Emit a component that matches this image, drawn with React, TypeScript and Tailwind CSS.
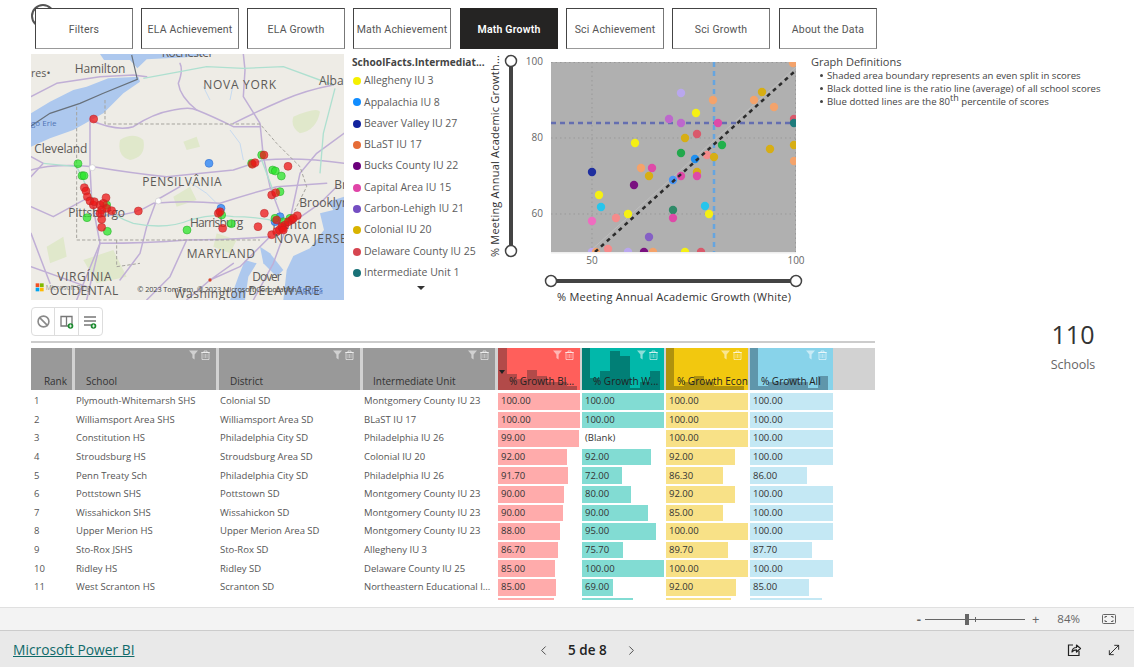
import React from 'react'
import { Ban, ChevronLeft, ChevronRight, MoveDiagonal } from 'lucide-react'

const tabs = ['Filters', 'ELA Achievement', 'ELA Growth', 'Math Achievement', 'Math Growth', 'Sci Achievement', 'Sci Growth', 'About the Data']

const legend: [string, string][] = [
  ['Allegheny IU 3', 'bg-[#f5f000]'],
  ['Appalachia IU 8', 'bg-[#118dff]'],
  ['Beaver Valley IU 27', 'bg-[#12239e]'],
  ['BLaST IU 17', 'bg-[#e66c37]'],
  ['Bucks County IU 22', 'bg-[#6b007b]'],
  ['Capital Area IU 15', 'bg-[#e044a7]'],
  ['Carbon-Lehigh IU 21', 'bg-[#744ec2]'],
  ['Colonial IU 20', 'bg-[#d9b300]'],
  ['Delaware County IU 25', 'bg-[#d64550]'],
  ['Intermediate Unit 1', 'bg-[#197278]'],
]

// scatter points: x, y inside the plot, colour
const dots: [number, number, string][] = [
  [130, 31, '#b9a7ee'], [162, 38, '#f4a36b'], [211, 30, '#d7ae14'], [203, 38, '#f4a36b'], [223, 45, '#f4a36b'],
  [145, 51, '#f5f014'], [118, 57, '#bd68cc'], [130, 61, '#bd68cc'], [167, 61, '#de4aa8'], [243, 57, '#d9596b'],
  [243, 61, '#1f7c7c'], [146, 72, '#d9596b'], [134, 76, '#d7ae14'], [84, 81, '#f5f014'], [171, 83, '#22b14c'],
  [243, 83, '#d7ae14'], [219, 87, '#d7ae14'], [130, 91, '#22a84c'], [144, 97, '#1f8fef'], [156, 93, '#f58b8b'],
  [163, 95, '#d7ae14'], [243, 99, '#f4a36b'], [41, 110, '#1f2f9f'], [90, 106, '#f4a36b'], [101, 106, '#de4aa8'],
  [98, 114, '#d7ae14'], [146, 110, '#d7ae14'], [146, 114, '#de4aa8'], [130, 114, '#de4aa8'], [122, 118, '#4a97f5'],
  [83, 123, '#7a1180'], [48, 133, '#f5f014'], [50, 145, '#27c5ec'], [154, 144, '#27c5ec'], [158, 152, '#f5f014'],
  [77, 152, '#f5f014'], [65, 156, '#f58b8b'], [41, 159, '#ef6cc0'], [122, 148, '#2f8a68'], [122, 156, '#de4aa8'],
  [98, 175, '#8560c5'], [41, 190, '#b9a7ee'], [45, 190, '#f4a36b'], [57, 187, '#f58b8b'], [77, 190, '#b9a7ee'],
  [93, 190, '#7a1180'], [102, 190, '#f4a36b'], [134, 190, '#f5f014'], [150, 190, '#d9596b'], [242, 1, '#f4a36b'],
]

type Row = { rank: number; school: string; district: string; unit: string; bars: [string, number][] }

const rows: Row[] = [
  { rank: 1, school: 'Plymouth-Whitemarsh SHS', district: 'Colonial SD', unit: 'Montgomery County IU 23', bars: [['100.00', 82], ['100.00', 82], ['100.00', 82], ['100.00', 83]] },
  { rank: 2, school: 'Williamsport Area SHS', district: 'Williamsport Area SD', unit: 'BLaST IU 17', bars: [['100.00', 82], ['100.00', 82], ['100.00', 82], ['100.00', 83]] },
  { rank: 3, school: 'Constitution HS', district: 'Philadelphia City SD', unit: 'Philadelphia IU 26', bars: [['99.00', 81], ['(Blank)', 0], ['100.00', 82], ['100.00', 83]] },
  { rank: 4, school: 'Stroudsburg HS', district: 'Stroudsburg Area SD', unit: 'Colonial IU 20', bars: [['92.00', 69], ['92.00', 69], ['92.00', 69], ['100.00', 83]] },
  { rank: 5, school: 'Penn Treaty Sch', district: 'Philadelphia City SD', unit: 'Philadelphia IU 26', bars: [['91.70', 70], ['72.00', 40], ['86.30', 57], ['86.00', 57]] },
  { rank: 6, school: 'Pottstown SHS', district: 'Pottstown SD', unit: 'Montgomery County IU 23', bars: [['90.00', 66], ['80.00', 49], ['92.00', 69], ['100.00', 83]] },
  { rank: 7, school: 'Wissahickon SHS', district: 'Wissahickon SD', unit: 'Montgomery County IU 23', bars: [['90.00', 65], ['90.00', 66], ['85.00', 57], ['100.00', 83]] },
  { rank: 8, school: 'Upper Merion HS', district: 'Upper Merion Area SD', unit: 'Montgomery County IU 23', bars: [['88.00', 62], ['95.00', 74], ['100.00', 82], ['100.00', 83]] },
  { rank: 9, school: 'Sto-Rox JSHS', district: 'Sto-Rox SD', unit: 'Allegheny IU 3', bars: [['86.70', 60], ['75.70', 41], ['89.70', 62], ['87.70', 62]] },
  { rank: 10, school: 'Ridley HS', district: 'Ridley SD', unit: 'Delaware County IU 25', bars: [['85.00', 57], ['100.00', 82], ['100.00', 82], ['100.00', 83]] },
  { rank: 11, school: 'West Scranton HS', district: 'Scranton SD', unit: 'Northeastern Educational I...', bars: [['85.00', 58], ['69.00', 31], ['92.00', 70], ['85.00', 59]] },
  { rank: 12, school: '', district: '', unit: '', bars: [['', 56], ['', 51], ['', 65], ['', 72]] },
]

const barColors = ['bg-[#ffabab]', 'bg-[#82dcd3]', 'bg-[#f8e187]', 'bg-[#c4e8f4]']
const barCols = ['w-[82px] ml-[3px]', 'w-[82px] ml-[2px]', 'w-[82px] ml-[2px]', 'w-[83px] ml-[2px]']

const histCols = [
  { title: '% Growth Bl...', bg: 'bg-[#ff5f5b]', dark: 'bg-[#b24a49]', first: 'w-[9px]', heights: [16, 11, 20, 14, 8, 8, 4], cls: 'w-[82px] ml-[3px]' },
  { title: '% Growth W...', bg: 'bg-[#01b8aa]', dark: 'bg-[#017f76]', first: 'w-[8px]', heights: [12, 19, 39, 34, 2, 8, 19], cls: 'w-[82px] ml-[2px]' },
  { title: '% Growth Econ', bg: 'bg-[#f2c80f]', dark: 'bg-[#b0920d]', first: 'w-[8px]', heights: [4, 8, 14, 8, 4, 4, 4], cls: 'w-[82px] ml-[2px]' },
  { title: '% Growth All', bg: 'bg-[#88d3ea]', dark: 'bg-[#5f96ab]', first: 'w-[8px]', heights: [4, 8, 8, 12, 8, 2, 14], cls: 'w-[83px] ml-[2px]' },
]

const definitions = [
  <>Shaded area boundary represents an even split in scores</>,
  <>Black dotted line is the ratio line (average) of all school scores</>,
  <>Blue dotted lines are the 80<sup className="text-[9px] leading-none">th</sup> percentile of scores</>,
]

const HeaderTools = () => (
  <svg width="24" height="10" viewBox="0 0 24 10" className="absolute top-[2px] right-[4px]">
    <path d="M1 0.5h9L6.6 4.5V9.5L4.4 8V4.5Z" fill="#fff" fillOpacity="0.55" />
    <path d="M13 2.5h9M16 2.5V1h3v1.5M14 2.5h7v7h-7Z" fill="none" stroke="#fff" strokeOpacity="0.55" strokeWidth="1" />
    <path d="M16 4v4M17.5 4v4M19 4v4" stroke="#fff" strokeOpacity="0.55" strokeWidth="0.7" />
  </svg>
)

const MapPanel = () => {
  const blue = [[627, 490], [663, 625], [840, 650], [825, 665]]
  const green = [[234, 491], [246, 527], [252, 527], [785, 465], [755, 490], [818, 510], [826, 513], [844, 528], [840, 575], [261, 653], [322, 694], [561, 690], [694, 671], [665, 645], [825, 655], [320, 615], [850, 665], [870, 655]]
  const red = [[281, 357], [864, 499], [757, 493], [765, 488], [415, 633], [668, 685], [774, 680], [815, 704], [815, 585], [827, 578], [305, 682], [305, 658], [335, 632], [318, 593], [253, 563], [258, 573], [262, 590], [270, 603], [280, 615], [283, 605], [300, 615], [310, 610], [305, 630], [300, 640], [320, 625], [655, 640], [660, 635], [830, 695], [838, 690], [848, 685], [855, 675], [865, 665], [875, 660], [892, 647], [880, 655], [830, 660], [845, 680], [850, 690], [792, 465], [793, 640]]
  const label = 'fill-[#5d5a57]'
  return (
    <svg width="313" height="246" viewBox="93 162 939 738" className="shrink-0" style={{ fontFamily: '"Open Sans", sans-serif' }}>
      <rect x="93" y="162" width="939" height="738" fill="#eeece6" />
      {/* forest patches */}
      <path d="M360 420 Q400 395 430 420 Q440 470 390 480 Q350 470 360 420ZM880 350 Q950 320 960 335 Q950 390 900 400 Q870 380 880 350ZM550 425 L590 410 L600 440 L560 450ZM650 700 L710 720 L690 760 L640 740ZM140 740 L190 710 L200 770 L150 790ZM520 590 L570 560 L590 600 L530 620ZM250 780 L340 750 L380 830 L290 850Z" fill="#e0e8cb" />
      {/* water */}
      <path d="M93 340 L150 305 L220 270 L260 260 L325 235 L415 230 L420 245 L370 280 L310 340 L220 390 L150 415 L93 440Z" fill="#adc8ee" />
      <path d="M300 162 L312 180 L390 180 L412 205 L440 178 L560 172 L640 162Z" fill="#adc8ee" />
      <path d="M1032 590 L985 605 L1000 630 L960 640 L972 690 L930 745 L880 768 L860 810 L850 900 L1032 900Z" fill="#adc8ee" />
      <path d="M780 740 L810 760 L850 810 L830 830 L790 790Z" fill="#adc8ee" />
      <path d="M735 780 L770 790 L745 830 L735 900 L690 900 L715 830Z" fill="#adc8ee" />
      {/* rivers */}
      <path d="M690 390 L720 430 L730 480 M610 260 L630 300 M700 250 L690 300 M560 540 L620 580 L660 620" stroke="#c6daf0" strokeWidth="3" fill="none" />
      {/* roads */}
      <g fill="none" stroke="#c0afd6" strokeWidth="4.5" strokeLinejoin="round" strokeLinecap="round">
        <path d="M93 290 L170 250 L300 230 L400 225 L440 230" />
        <path d="M540 190 Q550 210 535 250 Q540 290 590 330 Q640 350 700 380 L780 380" />
        <path d="M730 162 L735 210 L730 290 L780 370 L790 470 L810 560 L840 640" />
        <path d="M270 360 Q350 395 400 380 Q460 340 520 330 Q570 320 590 330" />
        <path d="M700 370 Q780 330 850 300 Q920 270 1000 255" />
        <path d="M270 350 L270 500 L275 600 L300 730 L260 900" />
        <path d="M93 510 Q160 490 280 500 Q400 520 500 530 Q600 520 700 510 L790 480 Q900 470 1032 490" />
        <path d="M280 640 Q380 660 460 610 Q560 600 660 610 Q750 580 830 560 L980 550" />
        <path d="M300 730 Q440 730 560 720 Q680 720 810 710" />
        <path d="M560 720 L510 830 L440 900 M810 710 L720 800 L630 840 L560 900 M630 840 L700 790" />
        <path d="M93 620 L160 650 L270 590 M93 700 L150 850 M93 800 L260 860 M230 900 L300 730" />
        <path d="M860 680 L960 610 L1010 560 M860 680 L820 790 L760 900 M1032 400 L950 460 L900 520 L870 660" />
        <path d="M93 470 L130 490 L93 530 M540 560 L470 600 L440 680 L420 760 L360 840" />
      </g>
      <g fill="none" stroke="#aee0d0" strokeWidth="4" strokeLinejoin="round">
        <path d="M430 235 L540 215 L620 200 L730 205 L850 200 L1000 255" />
        <path d="M1005 265 L970 400 L960 520" />
        <path d="M130 490 L230 500 L275 590 Q340 650 400 670 Q500 690 570 660 Q640 640 700 650 Q780 650 860 670 L890 650" />
        <path d="M785 480 L830 600" />
      </g>
      {/* borders */}
      <path d="M230 320 L230 720 L780 720 M315 300 L315 372 L780 372 L830 430 L900 500 L920 560 L880 640 M350 720 L350 800 L420 790" fill="none" stroke="#a5a39d" strokeWidth="3" strokeDasharray="10 6" />
      <path d="M93 378 L150 340 L240 310 L310 280 L412 238 L395 165" fill="none" stroke="#67707a" strokeWidth="3.5" />
      <circle cx="475" cy="603" r="9" fill="#fff" stroke="#ccc" strokeWidth="2" />
      <circle cx="277" cy="503" r="9" fill="#fff" stroke="#ccc" strokeWidth="2" />
      {/* place names */}
      <g fontSize="36">
        <text x="485" y="172" textLength="155" className={label}>Rochester</text>
        <text x="224" y="220" textLength="152" className={label}>Hamilton</text>
        <text x="93" y="232" fontSize="32" className={label}>res•</text>
        <text x="610" y="268" textLength="218" className={label}>NOVA YORK</text>
        <text x="957" y="255" className={label}>Albany</text>
        <text x="103" y="460" textLength="159" className={label}>Cleveland</text>
        <text x="93" y="378" fontSize="24" fill="#4f74b5">go Erie</text>
        <text x="427" y="557" textLength="238" className={label}>PENSILVÂNIA</text>
        <text x="205" y="652" textLength="170" className={label}>Pittsburgo</text>
        <text x="570" y="682" textLength="160" className={label}>Harrisburg</text>
        <text x="812" y="686" textLength="138" className={label}>Trenton</text>
        <text x="1003" y="568" className={label}>Br</text>
        <text x="898" y="622" className={label}>Brooklyn</text>
      </g>
      {/* pins */}
      {blue.map(([x, y], i) => <circle key={i} cx={x} cy={y} r="12" fill="#3a8df5" fillOpacity="0.85" stroke="#2a67c9" strokeWidth="1.5" />)}
      {green.map(([x, y], i) => <circle key={i} cx={x} cy={y} r="12" fill="#2ae52a" fillOpacity="0.75" stroke="#25a825" strokeWidth="1.5" />)}
      {red.map(([x, y], i) => <circle key={i} cx={x} cy={y} r="12" fill="#ee1515" fillOpacity="0.75" stroke="#b52a2a" strokeWidth="1.5" />)}
      <g fontSize="36">
        <text x="822" y="728" textLength="240" className={label}>NOVA JERSEY</text>
        <text x="560" y="774" textLength="205" className={label}>MARYLAND</text>
        <text x="172" y="844" textLength="163" className={label}>VIRGÍNIA</text>
        <text x="150" y="886" textLength="205" className={label}>OCIDENTAL</text>
        <text x="757" y="843" textLength="88" className={label}>Dover</text>
        <text x="523" y="895" textLength="214" className={label}>Washington</text>
        <text x="745" y="886" textLength="215" fill="#5d5a57">DELAWARE</text>
      </g>
      <circle cx="630" cy="840" r="5" fill="#d8452e" />
      <rect x="107" y="850" width="11" height="11" fill="#f25022" />
      <rect x="120" y="850" width="11" height="11" fill="#7fba00" />
      <rect x="107" y="863" width="11" height="11" fill="#00a4ef" />
      <rect x="120" y="863" width="11" height="11" fill="#ffb900" />
      <text x="137" y="870" fontSize="20" fill="#666" fillOpacity="0.7">Microsoft Bing</text>
      <text x="412" y="875" fontSize="22" textLength="478" fill="#444">© 2023 TomTom, © 2023 Microsoft Corporation</text>
      <text x="893" y="875" fontSize="22" textLength="75" fill="#3a66b5" textDecoration="underline">Terms</text>
    </svg>
  )
}

// the whole scatter chart, origin at 489,54 on the page
const ScatterChart = () => (
  <svg width="322" height="246" viewBox="0 0 322 246" className="shrink-0 overflow-visible" style={{ fontFamily: '"Open Sans", sans-serif' }}>
    <text transform="translate(9.5 203) rotate(-90)" fontSize="11" textLength="202" fill="#333">% Meeting Annual Academic Growth...</text>
    <line x1="22" y1="8" x2="22" y2="197" stroke="#444" strokeWidth="4" />
    <circle cx="22" cy="7" r="5.5" fill="#fff" stroke="#444" strokeWidth="1.5" />
    <circle cx="22" cy="197" r="5.5" fill="#fff" stroke="#444" strokeWidth="1.5" />
    <g fontSize="10" fill="#666" textAnchor="end">
      <text x="54" y="11">100</text>
      <text x="54" y="87">80</text>
      <text x="54" y="163">60</text>
    </g>
    <svg x="62" y="8" width="245" height="190" viewBox="0 0 245 190">
      <rect width="245" height="190" fill="#b0b0b0" />
      <path d="M0 0.5H245M0 76H245M0 152H245M41 0V190M244.5 0V190" stroke="#999" strokeDasharray="1.5 3" fill="none" />
      <line x1="38" y1="190" x2="245" y2="5" stroke="#bdbdbd" />
      <line x1="0" y1="61" x2="245" y2="61" stroke="#646eb0" strokeWidth="2.5" strokeDasharray="5 4" />
      <line x1="163" y1="0" x2="163" y2="190" stroke="#65a5e0" strokeWidth="2.5" strokeDasharray="5 4" />
      {dots.map(([x, y, c], i) => <circle key={i} cx={x} cy={y} r="4.2" fill={c} />)}
      <line x1="44" y1="190" x2="243" y2="10" stroke="#2b2b2b" strokeWidth="2.5" strokeDasharray="4 4" />
    </svg>
    <rect x="62" y="198" width="245" height="1.5" fill="#eee" />
    <g fontSize="10" fill="#666" textAnchor="middle">
      <text x="103" y="210">50</text>
      <text x="307" y="210">100</text>
    </g>
    <line x1="62" y1="227" x2="307" y2="227" stroke="#444" strokeWidth="4" />
    <circle cx="62" cy="227" r="5.5" fill="#fff" stroke="#444" strokeWidth="1.5" />
    <circle cx="307" cy="227" r="5.5" fill="#fff" stroke="#444" strokeWidth="1.5" />
    <text x="68" y="247" fontSize="11" textLength="234" fill="#333">% Meeting Annual Academic Growth (White)</text>
  </svg>
)

export default function App() {
  return (
    <div className="relative flex h-[667px] w-[1134px] flex-col overflow-hidden bg-white font-['Open_Sans',sans-serif] text-[#333]">
      {/* stray loading ring peeking out behind the first tab */}
      <div className="absolute left-[31px] top-[4px] h-6 w-6 rounded-full border-2 border-[#555]" />

      <div className="relative flex h-[607px] flex-col">
        <div className="flex pl-[35px] pt-2">
          {tabs.map((t, i) => (
            <div
              key={t}
              className={
                (t === 'Math Growth'
                  ? 'border-[#252423] bg-[#252423] font-semibold text-white '
                  : 'border-t-[#444] border-l-[#444] border-r-[#777] border-b-[#999] bg-white text-[#555] ') +
                'flex h-[41px] w-[98px] items-center justify-center whitespace-nowrap border-[1.5px] pt-[3px] font-[Roboto,sans-serif] text-[10.5px] tracking-[0.2px] ' +
                (i === 0 ? '' : i === 4 || i === 7 ? 'ml-[9px]' : 'ml-2')
              }
            >
              {t}
            </div>
          ))}
        </div>

        <div className="mt-[5px] flex h-[246px] pl-[31px]">
          <MapPanel />
          <div className="ml-2 flex h-[246px] w-[137px] shrink-0 flex-col text-[10.5px] text-[#5c5c5c]">
            <div className="mt-[2px] h-[13px] whitespace-nowrap text-[10.2px] font-bold leading-[13px] text-[#444]">SchoolFacts.Intermediat...</div>
            <div className="mt-[1.5px]">
              {legend.map(([name, c]) => (
                <div key={name} className="flex h-[21.3px] items-center">
                  <span className={'ml-px mr-[3px] h-2 w-2 shrink-0 rounded-full ' + c} />
                  {name}
                </div>
              ))}
            </div>
            <div className="ml-[65px] mt-[3px] h-0 w-0 border-x-[4px] border-t-[4px] border-x-transparent border-t-[#333]" />
          </div>
          <ScatterChart />
          <div className="mt-[1px] text-[9.6px] leading-[13px] text-[#444]">
            <div className="text-[11px] leading-[13px]">Graph Definitions</div>
            <div className="mt-px ml-[9px]">
              {definitions.map((d, i) => (
                <div key={i} className="flex items-center">
                  <span className="mr-[4px] h-[3px] w-[3px] shrink-0 rounded-full bg-[#444]" />
                  <span>{d}</span>
                </div>
              ))}
            </div>
          </div>
        </div>

        <div className="flex min-h-0 flex-1">
          <div className="w-[875px] shrink-0 pl-[31px]">
            <div className="mt-[7px] flex h-[29px] w-[72px] rounded-[4px] border border-[#ddd]">
              <div className="flex w-6 items-center justify-center border-r border-[#ddd]">
                <Ban size={13} strokeWidth={3} className="text-[#8a8a8a]" />
              </div>
              <div className="flex w-6 items-center justify-center border-r border-[#ddd]">
                <svg width="14" height="14" viewBox="0 0 14 14">
                  <path d="M1 1.5H12V11H1ZM6.5 1.5V11" fill="none" stroke="#777" strokeWidth="1.3" />
                  <circle cx="10.5" cy="11" r="2.8" fill="#1b8a2f" />
                  <path d="M9 11H12M10.5 9.5V12.5" stroke="#fff" strokeWidth="0.8" />
                </svg>
              </div>
              <div className="flex w-6 items-center justify-center">
                <svg width="14" height="14" viewBox="0 0 14 14">
                  <path d="M1 2H13M1 6H13M1 10H8" fill="none" stroke="#777" strokeWidth="1.5" />
                  <circle cx="10.5" cy="11" r="2.8" fill="#1b8a2f" />
                  <path d="M9 11H12M10.5 9.5V12.5" stroke="#fff" strokeWidth="0.8" />
                </svg>
              </div>
            </div>
            <div className="mt-[5px] h-[2px] bg-[#ccc]" />

            <div className="mt-[5px] flex h-[42px] bg-[#d2d2d2] text-[10px] text-[#333]">
              <div className="flex w-[41px] items-end justify-end bg-[#999] pb-px pr-[5px]">Rank</div>
              <div className="relative ml-[3px] flex w-[141px] items-end bg-[#999] pb-px pl-[11px]">School<HeaderTools /></div>
              <div className="relative ml-[3px] flex w-[141px] items-end bg-[#999] pb-px pl-[11px]">District<HeaderTools /></div>
              <div className="relative ml-[3px] flex w-[132px] items-end bg-[#999] pb-px pl-[10px]">Intermediate Unit<HeaderTools /></div>
              {histCols.map((h, n) => (
                <div key={h.title} className={'relative flex items-end overflow-hidden ' + h.bg + ' ' + h.cls}>
                  <div className={'h-full ' + h.dark + ' ' + h.first} />
                  {h.heights.map((v, i) => (
                    <div key={i} className={'w-[10px] ' + h.dark} style={{ height: v }} />
                  ))}
                  <HeaderTools />
                  {n === 0 && <div className="absolute left-[1px] top-[22px] h-0 w-0 border-x-[3px] border-t-[4px] border-x-transparent border-t-[#222]" />}
                  <div className="absolute bottom-px left-[11px] whitespace-nowrap text-[#222]">{h.title}</div>
                </div>
              ))}
            </div>

            <div className="mt-[2px] h-[208px] overflow-hidden text-[9.5px] text-[#555]">
              {rows.map((r) => (
                <div key={r.rank} className="flex h-[18.6px] items-center">
                  <div className="w-[41px] pl-[3px]">{r.school ? r.rank : ''}</div>
                  <div className="ml-[3px] w-[141px] pl-px">{r.school}</div>
                  <div className="ml-[3px] w-[141px] pl-px">{r.district}</div>
                  <div className="ml-[3px] w-[132px] pl-px">{r.unit}</div>
                  {r.bars.map(([label, w], i) => (
                    <div key={i} className={'h-full py-px ' + barCols[i]}>
                      <div className={'flex h-full items-center pl-[3px] text-[#333] ' + (w ? barColors[i] : '')} style={{ width: w || undefined }}>
                        {label}
                      </div>
                    </div>
                  ))}
                </div>
              ))}
            </div>
          </div>

          <div className="ml-[148px] mt-[19px] flex w-[100px] flex-col items-center">
            <div className="text-[25px] leading-[30px] text-[#333]">110</div>
            <div className="mt-[7px] text-[12.5px] text-[#666]">Schools</div>
          </div>
        </div>
      </div>

      <div className="flex h-[24px] items-center justify-end border-y border-t-[#e0e0e0] border-b-[#ccc] bg-[#f3f3f3] pr-[18px] text-[#666]">
        <span className="text-[13px] font-bold leading-none">-</span>
        <div className="relative ml-[4px] h-px w-[100px] bg-[#666]">
          <div className="absolute left-[40px] top-[-5px] h-[11px] w-[4px] bg-[#666]" />
          <div className="absolute left-[50px] top-[-2px] h-[5px] w-px bg-[#666]" />
        </div>
        <span className="ml-[7px] text-[13px] leading-none">+</span>
        <span className="ml-[18px] text-[11.5px]">84%</span>
        <svg width="14" height="10" viewBox="0 0 14 10" className="ml-[22px]">
          <rect x="0.5" y="0.5" width="13" height="9" rx="1" fill="none" stroke="#666" />
          <path d="M3 4V2.5H5M9 2.5H11V4M11 6V7.5H9M5 7.5H3V6" fill="none" stroke="#666" />
        </svg>
      </div>

      <div className="flex flex-1 items-center bg-[#e9e9e9] pl-[13px] pr-3 pt-[2px]">
        <a className="w-[523px] text-[13.8px] text-[#0f6a6a] underline">Microsoft Power BI</a>
        <ChevronLeft size={15} strokeWidth={1.5} className="text-[#444]" />
        <span className="ml-[17px] text-[13.5px] font-semibold text-[#222]">5 de 8</span>
        <ChevronRight size={15} strokeWidth={1.5} className="ml-[17px] text-[#444]" />
        <svg width="16" height="16" viewBox="0 0 16 16" className="ml-auto">
          <path d="M7 3H2.5V13.5H13V9" fill="none" stroke="#222" strokeWidth="1.2" />
          <path d="M6 10C6 7 8 5.5 10.5 5.5V3L14.5 6.5L10.5 10V7.8C8.5 7.8 7 8.5 6 10Z" fill="none" stroke="#222" strokeWidth="1.2" strokeLinejoin="round" />
        </svg>
        <MoveDiagonal size={16} strokeWidth={1.4} className="ml-6 text-[#222]" />
      </div>
    </div>
  )
}
